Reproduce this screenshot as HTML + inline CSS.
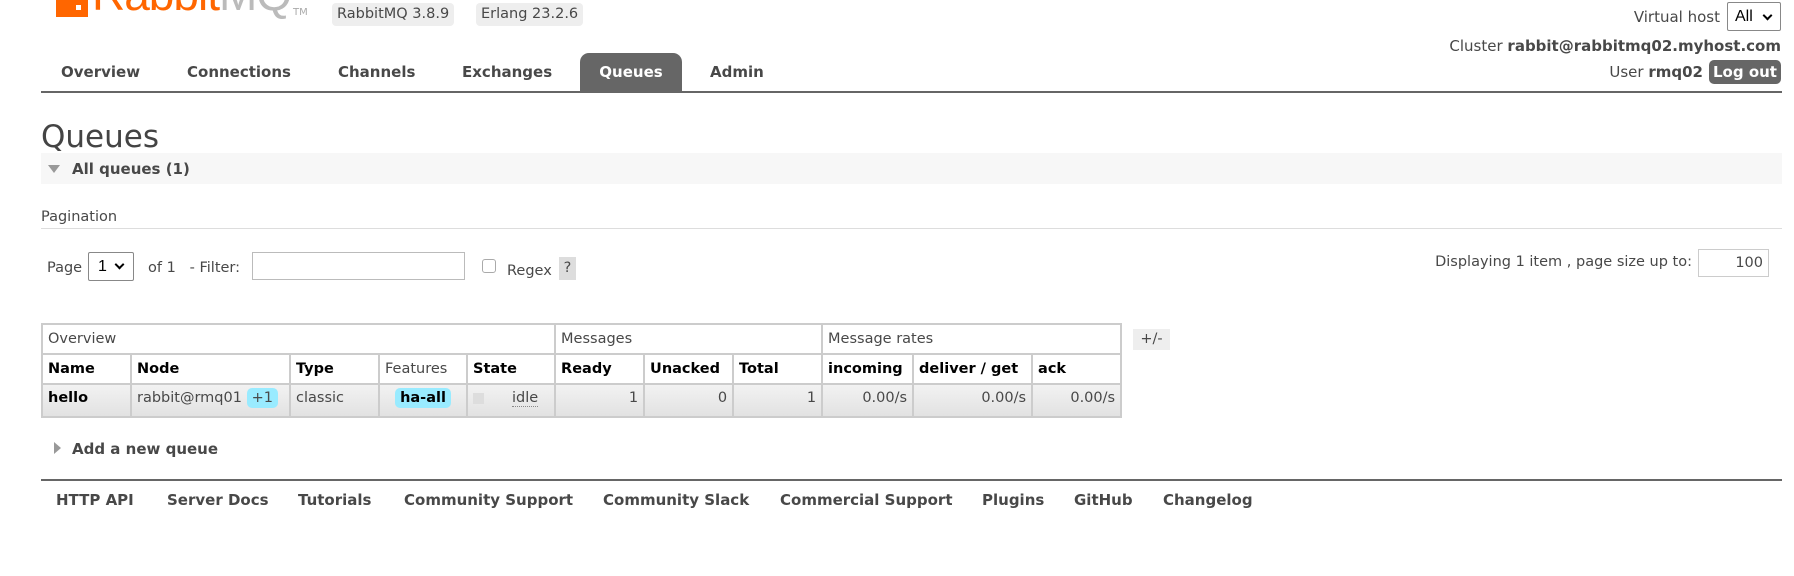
<!DOCTYPE html>
<html><head><meta charset="utf-8"><style>
*{margin:0;padding:0;box-sizing:border-box}
body{width:1794px;height:576px;background:#fff;position:relative;overflow:hidden;font-family:"DejaVu Sans","Liberation Sans",sans-serif;font-size:14.5px;color:#484848}
.a{position:absolute;white-space:nowrap}
.b{font-weight:bold}
.tab{position:absolute;top:53px;height:39px;line-height:38px;font-weight:bold;font-size:15px;color:#484848}
.sel{position:absolute;border:1px solid #888;border-radius:2px;background:#fff;color:#000;font-family:"Liberation Sans",sans-serif;font-size:16px}
.chev{position:absolute;width:7px;height:7px;border-right:2px solid #000;border-bottom:2px solid #000;transform:rotate(45deg)}
table{position:absolute;left:41px;top:323px;border-collapse:collapse;font-size:14.5px;table-layout:fixed;width:1079px}
td{border:2px solid #ccc;padding:0 5px;height:30px;white-space:nowrap;overflow:hidden}
tr.h td{font-weight:bold;color:#000}
tr.d td{background:linear-gradient(#f2f2f2,#e2e2e2);height:33px;vertical-align:top;padding-top:5px}
.r{text-align:right}
.pill{background:#99ebff;border-radius:5px;padding:2px 5px}
.foot{position:absolute;top:490px;line-height:20px;font-weight:bold;font-size:15px}
</style></head><body>
<div class="a" style="left:56px;top:0;width:32px;height:17px;background:#f60"></div>
<div class="a" style="left:76px;top:5px;width:5px;height:5px;background:#fff"></div>
<div class="a" style="left:92px;top:-31px;font-family:'Liberation Sans',sans-serif;font-size:46px;line-height:50px;color:#f60;letter-spacing:-1px">Rabbit<span style="color:#bbb">MQ</span></div>
<div class="a" style="left:293px;top:8px;font-size:10px;color:#aaa;line-height:10px">TM</div>
<div class="a" style="left:332px;top:3px;height:23px;line-height:23px;padding:0 5px;background:#eee;border-radius:4px;font-size:14.5px">RabbitMQ 3.8.9</div>
<div class="a" style="left:476px;top:3px;height:23px;line-height:23px;padding:0 5px;background:#eee;border-radius:4px;font-size:14.5px">Erlang 23.2.6</div>
<div class="a" style="right:74px;top:7px;line-height:20px;font-size:15px">Virtual host</div>
<div class="sel" style="left:1727px;top:2px;width:54px;height:29px;line-height:27px;padding-left:7px">All</div>
<div class="chev" style="left:1764px;top:12px"></div>
<div class="a" style="right:13px;top:36px;line-height:20px;font-size:15px">Cluster <b>rabbit@rabbitmq02.myhost.com</b></div>
<div class="a" style="right:91px;top:62px;line-height:20px;font-size:15px">User <b>rmq02</b></div>
<div class="a b" style="left:1709px;top:60px;width:72px;height:24px;line-height:24px;text-align:center;background:#666;color:#fff;border-radius:5px;font-size:15px">Log out</div>
<div class="tab" style="left:61px">Overview</div>
<div class="tab" style="left:187px">Connections</div>
<div class="tab" style="left:338px">Channels</div>
<div class="tab" style="left:462px">Exchanges</div>
<div class="tab" style="left:580px;width:102px;background:#666;color:#fff;text-align:center;border-radius:9px 9px 0 0">Queues</div>
<div class="tab" style="left:710px">Admin</div>
<div class="a" style="left:41px;top:91px;width:1741px;height:2px;background:#666"></div>
<div class="a" style="left:41px;top:118px;font-size:31px;line-height:38px;color:#444">Queues</div>
<div class="a" style="left:41px;top:153px;width:1741px;height:31px;background:#f7f7f7"></div>
<div class="a" style="left:48px;top:165px;width:0;height:0;border-left:6px solid transparent;border-right:6px solid transparent;border-top:8px solid #999"></div>
<div class="a b" style="left:72px;top:159px;line-height:20px;font-size:15px">All queues (1)</div>
<div class="a" style="left:41px;top:207px;line-height:20px">Pagination</div>
<div class="a" style="left:41px;top:228px;width:1741px;height:1px;background:#ddd"></div>
<div class="a" style="left:47px;top:258px;line-height:20px">Page</div>
<div class="sel" style="left:88px;top:252px;width:46px;height:29px;line-height:27px;padding-left:9px">1</div>
<div class="chev" style="left:116px;top:261px"></div>
<div class="a" style="left:148px;top:258px;line-height:20px">of 1 &nbsp; - Filter:</div>
<div class="a" style="left:252px;top:252px;width:213px;height:28px;border:1px solid #bbb"></div>
<div class="a" style="left:482px;top:259px;width:14px;height:14px;border:1px solid #aaa;border-radius:3px"></div>
<div class="a" style="left:507px;top:261px;line-height:20px">Regex</div>
<div class="a" style="left:559px;top:257px;width:17px;height:23px;background:#ddd;line-height:23px;text-align:center">?</div>
<div class="a" style="right:102px;top:252px;line-height:20px">Displaying 1 item , page size up to:</div>
<div class="a" style="left:1698px;top:249px;width:71px;height:28px;border:1px solid #ccc;line-height:26px;text-align:right;padding-right:5px">100</div>
<table>
<colgroup><col style="width:89px"><col style="width:159px"><col style="width:89px"><col style="width:88px"><col style="width:88px"><col style="width:89px"><col style="width:89px"><col style="width:89px"><col style="width:91px"><col style="width:119px"><col style="width:89px"></colgroup>
<tr><td colspan="5">Overview</td><td colspan="3">Messages</td><td colspan="3">Message rates</td></tr>
<tr class="h"><td>Name</td><td>Node</td><td>Type</td><td style="font-weight:normal;color:#484848">Features</td><td>State</td><td>Ready</td><td>Unacked</td><td>Total</td><td>incoming</td><td>deliver / get</td><td>ack</td></tr>
<tr class="d"><td class="b" style="color:#000">hello</td><td>rabbit@rmq01 <span class="pill">+1</span></td><td>classic</td><td style="text-align:center"><span class="pill b" style="color:#000">ha-all</span></td><td><span style="display:inline-block;width:11px;height:11px;background:#ddd;vertical-align:middle"></span><span style="margin-left:28px;border-bottom:1px dotted #888">idle</span></td><td class="r">1</td><td class="r">0</td><td class="r">1</td><td class="r">0.00/s</td><td class="r">0.00/s</td><td class="r">0.00/s</td></tr>
</table>
<div class="a" style="left:1133px;top:329px;width:37px;height:21px;background:#eee;line-height:21px;text-align:center">+/-</div>
<div class="a" style="left:54px;top:442px;width:0;height:0;border-top:6px solid transparent;border-bottom:6px solid transparent;border-left:7px solid #999"></div>
<div class="a b" style="left:72px;top:439px;line-height:20px;font-size:15px">Add a new queue</div>
<div class="a" style="left:41px;top:479px;width:1741px;height:2px;background:#666"></div>
<div class="foot" style="left:56px">HTTP API</div>
<div class="foot" style="left:167px">Server Docs</div>
<div class="foot" style="left:298px">Tutorials</div>
<div class="foot" style="left:404px">Community Support</div>
<div class="foot" style="left:603px">Community Slack</div>
<div class="foot" style="left:780px">Commercial Support</div>
<div class="foot" style="left:982px">Plugins</div>
<div class="foot" style="left:1074px">GitHub</div>
<div class="foot" style="left:1163px">Changelog</div>
</body></html>
